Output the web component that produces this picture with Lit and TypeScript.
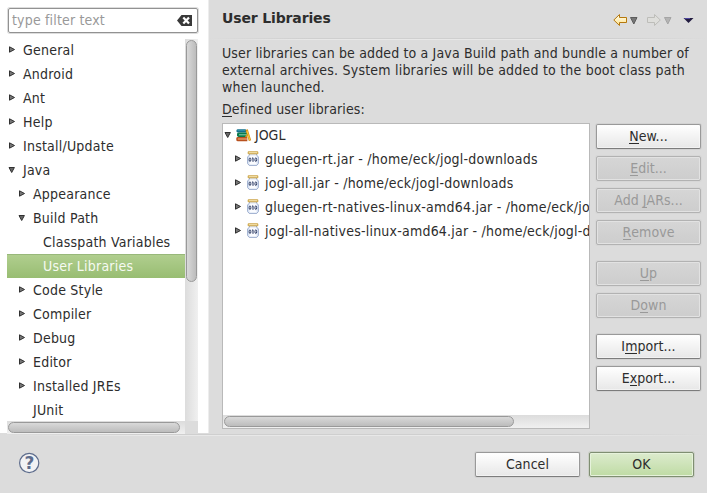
import { LitElement, html, css, svg, nothing } from "lit";
import { customElement, property } from "lit/decorators.js";
import { classMap } from "lit/directives/class-map.js";

type Row = { label: string; level: number; arrow: "closed" | "open" | "none"; selected?: boolean };

const ROWS: Row[] = [
  { label: "General", level: 0, arrow: "closed" },
  { label: "Android", level: 0, arrow: "closed" },
  { label: "Ant", level: 0, arrow: "closed" },
  { label: "Help", level: 0, arrow: "closed" },
  { label: "Install/Update", level: 0, arrow: "closed" },
  { label: "Java", level: 0, arrow: "open" },
  { label: "Appearance", level: 1, arrow: "closed" },
  { label: "Build Path", level: 1, arrow: "open" },
  { label: "Classpath Variables", level: 2, arrow: "none" },
  { label: "User Libraries", level: 2, arrow: "none", selected: true },
  { label: "Code Style", level: 1, arrow: "closed" },
  { label: "Compiler", level: 1, arrow: "closed" },
  { label: "Debug", level: 1, arrow: "closed" },
  { label: "Editor", level: 1, arrow: "closed" },
  { label: "Installed JREs", level: 1, arrow: "closed" },
  { label: "JUnit", level: 1, arrow: "none" },
];

const JARS = [
  "gluegen-rt.jar - /home/eck/jogl-downloads",
  "jogl-all.jar - /home/eck/jogl-downloads",
  "gluegen-rt-natives-linux-amd64.jar - /home/eck/jogl-downloads",
  "jogl-all-natives-linux-amd64.jar - /home/eck/jogl-downloads",
];

const arrow = (kind: string) => html`<svg class="arrow" width="8" height="8" viewBox="0 0 8 8">
  ${kind === "closed"
    ? svg`<path d="M1.5 .8L6.5 3.5L1.5 6.2Z" fill="#777" stroke="#303030"/>`
    : kind === "open"
      ? svg`<path d="M1 1.5H6.4L3.7 6.5Z" fill="#666" stroke="#303030"/>`
      : nothing}
</svg>`;

const books = html`<svg width="16" height="16" viewBox="0 0 16 16">
  <path d="M.5 3L1.5 2.3H9.5L10.5 3.2V5.6H1.5L.5 4.8Z" fill="#14708c"/><path d="M1.5 3.4H9" stroke="#3c9ab4" stroke-width=".8"/>
  <path d="M1 6.5L2.5 5.6H11V9.9H2.5L1 9Z" fill="#0a7a4c"/><path d="M3 7.8H11" stroke="#8ad0b0" stroke-width="1"/>
  <path d="M.3 10.8L1.5 10H11.3V14.2H1.5L.3 13.4Z" fill="#b8501e"/><path d="M1.8 12H11.3" stroke="#f0b080" stroke-width="1.1"/>
  <path d="M10.6 2.6L14 13.6" stroke="#d48a10" stroke-width="2.4"/><path d="M10.9 3.6L13.8 13" stroke="#ffc93e" stroke-width="1.1"/>
  <path d="M12 7.5L9.6 9.8" stroke="#e09a18" stroke-width="1.6"/>
</svg>`;

const jar = html`<svg width="12" height="16" viewBox="0 0 12 16">
  <path d="M2.5 2.5V4L.6 6V12.5L2.2 14.4H9.8L11.4 12.5V6L9.5 4V2.5Z" fill="#dfe8f7" stroke="#93a5c8" stroke-width=".9"/>
  <path d="M2.6 4.6H9.4V13.5H2.6Z" fill="#fbfcff"/>
  <path d="M1.2 .8H10.8V2.8H1.2Z" fill="#fff3c8" stroke="#c4962c" stroke-width=".9"/>
  <ellipse cx="3" cy="8.7" rx=".9" ry="1.8" fill="#fff" stroke="#1d2c58" stroke-width=".9"/>
  <path d="M5.2 7.2L6 6.8V10.8" fill="none" stroke="#1d2c58"/>
  <ellipse cx="8.8" cy="8.7" rx=".9" ry="1.8" fill="#fff" stroke="#1d2c58" stroke-width=".9"/>
</svg>`;

@customElement("push-button")
class PushButton extends LitElement {
  static styles = css`
    :host { display: block; width: 105px; height: 25px; flex: none; }
    .b {
      box-sizing: border-box; height: 25px; border: 1px solid #999; border-bottom-color: #7c7c7c; border-radius: 2px;
      background: linear-gradient(#fff, #e7e7e7); box-shadow: 0 0 0 1px #d2d2d2, inset 0 0 0 1px #fbfbfb88;
      display: flex; justify-content: center; line-height: 23px; color: #2d2d2d; white-space: pre; letter-spacing: 0.05px;
    }
    .off { background: linear-gradient(#d6d6d6, #cdcdcd); color: #999; border-color: #b2b2b2; box-shadow: 0 0 0 1px #d7d7d7, inset 0 0 0 1px #e2e2e2; }
    .ok { background: linear-gradient(#dcebcd, #bfdba4); border-color: #7f8e72; box-shadow: 0 0 0 1px #cbd0c6, inset 0 0 0 1px #e6f2db; }
    u { text-decoration: none; box-shadow: inset 0 -1px currentColor; height: 19px; line-height: 23px; }
  `;
  @property() label = "";
  @property({ type: Number }) key = -1;
  @property() kind = "";
  render() {
    const k = this.key;
    return html`<div class=${classMap({ b: true, off: this.kind === "off", ok: this.kind === "ok" })}>${
      k < 0 ? this.label : html`<span>${this.label.slice(0, k)}</span><u>${this.label[k]}</u><span>${this.label.slice(k + 1)}</span>`
    }</div>`;
  }
}

@customElement("app-root")
class AppRoot extends LitElement {
  static styles = css`
    :host {
      display: flex; flex-direction: column; width: 707px; height: 493px; overflow: hidden; background: #dcdcdc; color: #2d2d2d;
      font: 14px/17px "DejaVu Sans Condensed", "DejaVu Sans", sans-serif; font-stretch: condensed;
    }
    * { box-sizing: border-box; }
    svg { display: block; flex: none; }
    .main { display: flex; height: 433px; }
    .left { width: 209px; background: #fff; border-right: 1px solid #ededed; padding: 8px 0 0 7px; }
    .filter {
      width: 190px; height: 25px; border: 1px solid #929292; border-radius: 2px; box-shadow: 0 0 0 1px #ddd;
      display: flex; align-items: center; justify-content: space-between; padding: 0 5px 1px 3px; color: #999; margin-left: 1px;
      letter-spacing: 0.17px;
    }
    .tree { display: grid; grid-template-columns: 178px 13px; grid-template-rows: 382px 13px; margin-top: 6px; }
    .rows { overflow: hidden; margin-top: -1px; letter-spacing: 0.22px; }
    .row { height: 24px; display: flex; align-items: center; white-space: nowrap; padding-left: 1px; }
    .l1 { padding-left: 11px; }
    .l2 { padding-left: 21px; }
    .row .arrow { margin-right: 7px; }
    .sel { background: linear-gradient(#b0ce8e, #98bd72); border-top: 1px solid #98b87a; color: #f6faf2; }
    .sel span { margin-top: -1px; }
    .vtrack { background: linear-gradient(90deg, #dcdcdc, #f0f0f0); padding: 1px; }
    .vthumb { height: 242px; width: 11px; border: 1px solid #999; border-radius: 6px; background: linear-gradient(90deg, #d9d9d9, #bcbcbc); }
    .htrack { background: linear-gradient(#dcdcdc, #f0f0f0); padding: 1px; }
    .hthumb { height: 11px; border: 1px solid #999; border-radius: 6px; background: linear-gradient(#d9d9d9, #bcbcbc); }
    .left .hthumb { width: 172px; }
    .corner { background: #dcdcdc; }
    .right { flex: 1; }
    .head { height: 40px; display: flex; justify-content: space-between; padding: 10px 12px 0 13px;
      background: linear-gradient(90deg, #dcdcdc, #e8e8e8 20%, #e8e8e8 80%, #dcdcdc) 0 39px / 100% 1px no-repeat,
      linear-gradient(90deg, #dcdcdc, #cfcfcf 20%, #cfcfcf 80%, #dcdcdc) 0 38px / 100% 1px no-repeat; }
    h1 { margin: 0; font: bold 14px/17px "DejaVu Sans", sans-serif; font-stretch: normal; letter-spacing: -0.14px; }
    .desc { padding: 5px 0 0 13px; white-space: nowrap; }
    .desc div { letter-spacing: 0.21px; }
    .desc .first { letter-spacing: 0.145px; }
    .defined { padding: 5px 0 0 13px; height: 27px; letter-spacing: 0.14px; }
    .defined u { text-decoration: none; box-shadow: inset 0 -1px currentColor; }
    .body { display: flex; padding-left: 13px; gap: 6px; }
    .list { width: 368px; height: 306px; background: #fff; border: 1px solid #b9b9b9; display: flex; flex-direction: column; }
    .entries { flex: 1; overflow: hidden; }
    .entry { height: 24px; display: flex; align-items: center; white-space: nowrap; padding-left: 11px; letter-spacing: 0.22px; }
    .entry .arrow { margin-right: 5px; }
    .entry svg + svg { margin-right: 6px; }
    .top { padding-left: 1px; margin-top: -1px; letter-spacing: 0; }
    .top .arrow { margin-right: 4px; }
    .top svg + svg { margin-right: 3px; }
    .list .htrack { height: 13px; }
    .list .hthumb { width: 290px; }
    .buttons { display: flex; flex-direction: column; gap: 7px; padding-top: 1px; }
    .gap { margin-top: 9px; }
    .foot { flex: 1; display: flex; align-items: flex-start; padding: 19px 13px 0 19px; gap: 9px;
      background: linear-gradient(90deg, #dcdcdc, #e8e8e8 20%, #e8e8e8 80%, #dcdcdc) 0 2px / 100% 1px no-repeat,
      linear-gradient(90deg, #dcdcdc, #cfcfcf 20%, #cfcfcf 80%, #dcdcdc) 0 1px / 100% 1px no-repeat; }
    .help { margin-right: auto; }
    .qm { font: bold 17px "DejaVu Sans", sans-serif; font-stretch: normal; }
  `;
  render() {
    return html`
      <div class="main">
        <div class="left">
          <div class="filter"><span>type filter text</span>
            <svg width="15" height="11" viewBox="0 0 15 11"><path d="M0 5.5L4.5 0H15V11H4.5Z" fill="#393939"/><path d="M6.3 2.5L12 8.5M12 2.5L6.3 8.5" stroke="#fff" stroke-width="2.2"/></svg>
          </div>
          <div class="tree">
            <div class="rows">${ROWS.map((r) => html`<div class=${classMap({ row: true, l1: r.level === 1, l2: r.level === 2, sel: !!r.selected })}>${arrow(r.arrow)}<span>${r.label}</span></div>`)}</div>
            <div class="vtrack"><div class="vthumb"></div></div>
            <div class="htrack"><div class="hthumb"></div></div>
            <div class="corner"></div>
          </div>
        </div>
        <div class="right">
          <div class="head"><h1>User Libraries</h1>
            <svg width="82" height="17" viewBox="0 0 82 17">
              <defs><linearGradient id="g" x2="0" y2="1"><stop stop-color="#fffdf0"/><stop offset="1" stop-color="#ffe28a"/></linearGradient></defs>
              <path d="M.8 10L6.5 4.5V7.5H13.5V12.5H6.5V15.5Z" fill="url(#g)" stroke="#b5780d"/>
              <path d="M17.5 7.5H24L20.8 14Z" fill="#777" stroke="#5c5c5c"/>
              <path d="M47.3 10L41.5 4.5V7.5H34.5V12.5H41.5V15.5Z" fill="#dededb" stroke="#bdbdb9"/>
              <path d="M51.5 7.5H58L54.8 14Z" fill="#b4b4b4" stroke="#a5a5a5"/>
              <path d="M70.5 8H80.5L75.5 13Z" fill="#221c40"/><path d="M71.5 8.5H77" stroke="#5048a0"/>
            </svg>
          </div>
          <div class="desc">
            <div class="first">User libraries can be added to a Java Build path and bundle a number of</div>
            <div>external archives. System libraries will be added to the boot class path</div>
            <div>when launched.</div>
          </div>
          <div class="defined"><u>D</u>efined user libraries:</div>
          <div class="body">
            <div class="list">
              <div class="entries">
                <div class="entry top">${arrow("open")}${books}<span>JOGL</span></div>
                ${JARS.map((j) => html`<div class="entry">${arrow("closed")}${jar}<span>${j}</span></div>`)}
              </div>
              <div class="htrack"><div class="hthumb"></div></div>
            </div>
            <div class="buttons">
              <push-button label="New..." key="0"></push-button>
              <push-button label="Edit..." key="0" kind="off"></push-button>
              <push-button label="Add JARs..." key="4" kind="off"></push-button>
              <push-button label="Remove" key="0" kind="off"></push-button>
              <push-button class="gap" label="Up" key="0" kind="off"></push-button>
              <push-button label="Down" key="1" kind="off"></push-button>
              <push-button class="gap" label="Import..." key="1"></push-button>
              <push-button label="Export..." key="1"></push-button>
            </div>
          </div>
        </div>
      </div>
      <div class="foot">
        <svg class="help" width="21" height="22" viewBox="0 0 21 22"><circle cx="10.2" cy="11" r="9.6" fill="#f1f2f4" stroke="#5d6c8c" stroke-width="1.2"/><text class="qm" x="10.4" y="17.2" text-anchor="middle" fill="#5d6c8c">?</text></svg>
        <push-button label="Cancel"></push-button>
        <push-button label="OK" kind="ok"></push-button>
      </div>`;
  }
}
